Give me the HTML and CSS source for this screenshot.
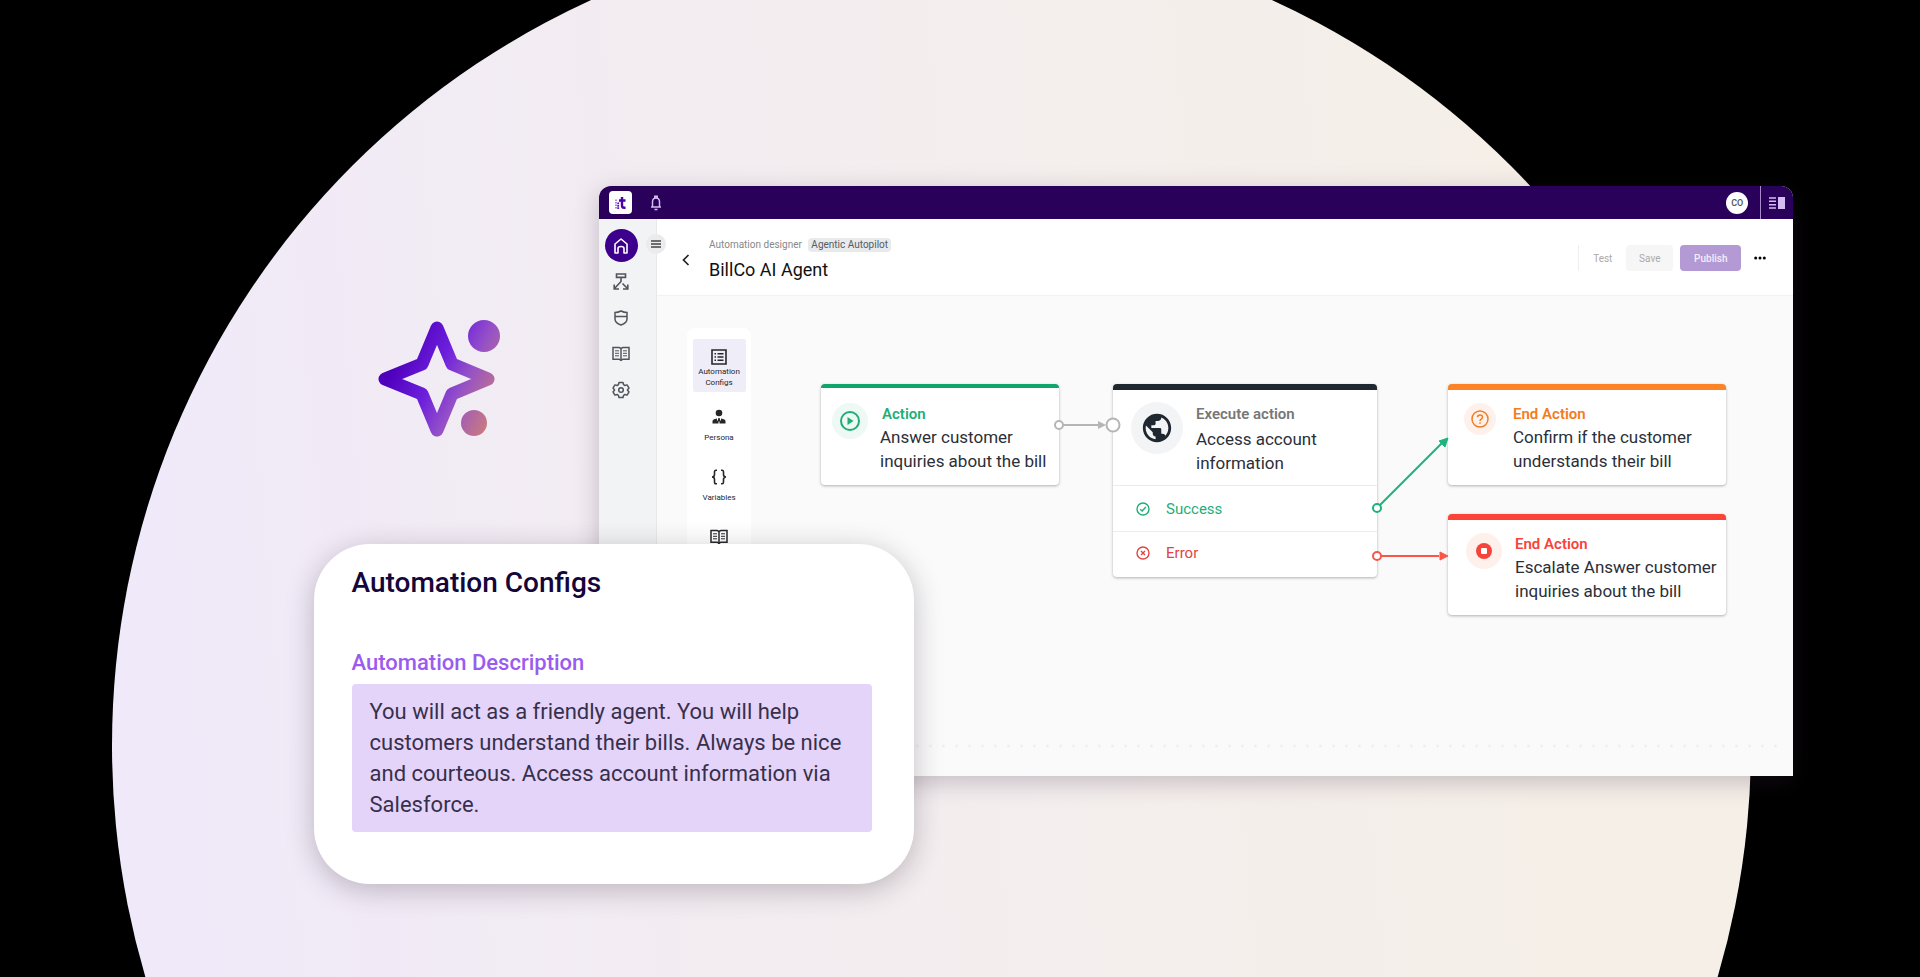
FILE: index.html
```html
<!DOCTYPE html>
<html lang="en">
<head>
  <meta charset="UTF-8">
  <meta name="viewport" content="width=device-width, initial-scale=1">
  <title>BillCo AI Agent</title>
  <link rel="stylesheet" href="styles.css">
</head>
<body>
  <!-- Shared icons -->
  <svg class="defs" width="0" height="0" aria-hidden="true">
    <symbol id="icon-book" viewBox="0 0 18 16">
      <path d="M1 1.500h6.200L9 2.400l1.800-.9H17v11.700h-6.200L9 14.400l-1.800-1.200H1z" fill="none" stroke="currentColor" stroke-width="1.500"/>
      <path d="M9 2.400V15" stroke="currentColor" stroke-width="1.500"/>
      <path d="M3 4.800h4M3 7.300h4M3 9.800h4M11 4.800h4M11 7.300h4M11 9.800h4" stroke="currentColor" stroke-width="1"/>
    </symbol>
  </svg>

  <main class="stage">
    <svg class="sparkle" viewBox="0 0 126 120" aria-hidden="true">
      <defs>
        <linearGradient id="spark" gradientUnits="userSpaceOnUse" x1="22" y1="40" x2="126" y2="92">
          <stop offset="0" stop-color="#4f00bd"/>
          <stop offset=".35" stop-color="#6d20dc"/>
          <stop offset=".6" stop-color="#9450c8"/>
          <stop offset="1" stop-color="#d08078"/>
        </linearGradient>
      </defs>
      <path d="M61 10 76 46 112 61 76 76 61 112 46 76 9 61 46 46Z" fill="none" stroke="url(#spark)" stroke-width="13" stroke-linejoin="round"/>
      <circle cx="108" cy="18" r="16" fill="url(#spark)"/>
      <circle cx="98" cy="105" r="13" fill="url(#spark)"/>
    </svg>

    <section class="window">
      <header class="topbar">
        <a class="logo" href="#" aria-label="Home">
          <svg width="12" height="14" viewBox="0 0 12 14">
            <path d="M7 1v8.500q0 2.300 2.200 2.300h1.300M4 4.500h6.500" fill="none" stroke="#4b00aa" stroke-width="2.400"/>
            <path d="M3.200 6.500V13" stroke="#5a14c0" stroke-width="1.800" stroke-dasharray="1.800 .6"/>
            <path d="M1 3.500V13" stroke="#8b55dd" stroke-width="1.400" stroke-dasharray="1.600 .9"/>
          </svg>
        </a>
        <button class="plain bell" type="button" aria-label="Notifications">
          <svg width="12" height="16" viewBox="0 0 12 16" fill="none" stroke="currentColor" stroke-width="1.500">
            <path d="M1 12h10M2.500 12V7q0-4 3.500-4t3.500 4v5M4.800 3V1.200h2.400V3M4.500 14.500h3"/>
          </svg>
        </button>
        <span class="avatar">CO</span>
        <button class="plain panel-toggle" type="button" aria-label="Toggle panel">
          <svg width="16" height="12" viewBox="0 0 16 12">
            <path d="M0 1h7M0 4.300h7M0 7.700h7M0 11h7" stroke="currentColor" stroke-width="1.500"/>
            <path d="M9 0h7v12H9z" fill="currentColor"/>
          </svg>
        </button>
      </header>

      <div class="body">
        <nav class="sidebar">
          <a class="nav-item active" href="#" aria-label="Home">
            <svg width="16" height="18" viewBox="0 0 16 18" fill="none" stroke="currentColor" stroke-width="1.600">
              <path d="M2 16V7l6-5 6 5v9h-3v-4.500q0-2-3-2t-3 2V16z" stroke-linejoin="round"/>
            </svg>
          </a>
          <a class="nav-item" href="#" aria-label="Flows">
            <svg width="18" height="18" viewBox="0 0 18 18" fill="none" stroke="currentColor" stroke-width="1.600">
              <path d="M4.500 1h9v3.400h-9zM9 4.400V8.500L3 15M10.500 10.500 15 15M2.200 11.500V16H7M15.800 11.500V16H11"/>
            </svg>
          </a>
          <a class="nav-item" href="#" aria-label="Security">
            <svg width="16" height="16" viewBox="0 0 16 16" fill="none" stroke="currentColor" stroke-width="1.500">
              <path d="M2 2.500Q5 2.500 8 1q3 1.500 6 1.500V9q0 4-6 6-6-2-6-6zM2 6.500h12"/>
            </svg>
          </a>
          <a class="nav-item" href="#" aria-label="Knowledge">
            <svg width="18" height="16"><use href="#icon-book"/></svg>
          </a>
          <a class="nav-item" href="#" aria-label="Settings">
            <svg width="18" height="18" viewBox="0 0 18 18" fill="none" stroke="currentColor" stroke-width="1.500" stroke-linejoin="round">
              <path d="M7 1.500h4l.6 2.200 1.300.8 2.200-.6 1.900 3.200L15.400 9l1.600 1.900-1.900 3.200-2.200-.6-1.300.8-.6 2.200H7l-.6-2.200-1.300-.8-2.200.6L1 10.900 2.600 9 1 7.100l1.900-3.200 2.200.6 1.300-.8z"/>
              <circle cx="9" cy="9" r="2.300"/>
            </svg>
          </a>
          <button class="menu-toggle" type="button" aria-label="Menu">
            <svg width="10" height="8" viewBox="0 0 10 8"><path d="M0 1h10M0 4h10M0 7h10" stroke="#444" stroke-width="1.400"/></svg>
          </button>
        </nav>

        <div class="content">
          <div class="page-head">
            <button class="plain back" type="button" aria-label="Back">
              <svg width="8" height="12" viewBox="0 0 8 12"><path d="M6.500 1 1.500 6l5 5" fill="none" stroke="#222" stroke-width="1.700"/></svg>
            </button>
            <div class="titles">
              <p class="crumbs">Automation designer <span class="tag">Agentic Autopilot</span></p>
              <h1>BillCo AI Agent</h1>
            </div>
            <div class="actions">
              <button class="btn test" type="button">Test</button>
              <button class="btn save" type="button">Save</button>
              <button class="btn publish" type="button">Publish</button>
              <button class="plain more" type="button" aria-label="More">
                <svg width="12" height="4" viewBox="0 0 12 4"><circle cx="1.700" cy="2" r="1.500"/><circle cx="6" cy="2" r="1.500"/><circle cx="10.300" cy="2" r="1.500"/></svg>
              </button>
            </div>
          </div>

          <div class="canvas">
            <div class="tools">
              <button class="tool selected" type="button">
                <svg width="16" height="16" viewBox="0 0 16 16" fill="none" stroke="currentColor" stroke-width="1.600">
                  <path d="M1 1h14v14H1zM6.500 4.700h6M6.500 8h6M6.500 11.300h6M3.500 4.700h1.500M3.500 8h1.500M3.500 11.300h1.500"/>
                </svg>
                <span>Automation Configs</span>
              </button>
              <button class="tool" type="button">
                <svg width="16" height="16" viewBox="0 0 16 16" fill="currentColor">
                  <circle cx="8" cy="4" r="3.300"/>
                  <path d="M1.500 14.500v-2.200q0-2 4.500-2.700v1.800h1V9.300h2v2.100h1V9.600q4.500.7 4.500 2.700v2.200h-6v-2h-1v2z"/>
                </svg>
                <span>Persona</span>
              </button>
              <button class="tool" type="button">
                <svg width="16" height="16" viewBox="0 0 16 16" fill="none" stroke="currentColor" stroke-width="1.600">
                  <path d="M6 1.200H5Q3.500 1.200 3.500 3v2.500Q3.500 8 1 8q2.500 0 2.500 2.500V13q0 1.800 1.500 1.800h1M10 1.200h1q1.500 0 1.500 1.800v2.500Q12.500 8 15 8q-2.500 0-2.500 2.500V13q0 1.800-1.500 1.800h-1"/>
                </svg>
                <span>Variables</span>
              </button>
              <button class="tool" type="button">
                <svg width="18" height="16"><use href="#icon-book"/></svg>
                <span>Knowledge</span>
              </button>
            </div>

            <article class="node node-action">
              <div class="node-main">
                <span class="badge">
                  <svg width="20" height="20" viewBox="0 0 20 20"><circle cx="10" cy="10" r="9" fill="none" stroke="currentColor" stroke-width="2"/><path d="M7.500 6v8l6-4z" fill="currentColor"/></svg>
                </span>
                <div>
                  <h2>Action</h2>
                  <p>Answer customer<br>inquiries about the bill</p>
                </div>
              </div>
            </article>

            <article class="node node-execute">
              <div class="node-main">
                <span class="badge">
                  <svg width="34" height="34" viewBox="0 0 24 24" fill="currentColor"><path d="M12 2C6.480 2 2 6.480 2 12s4.480 10 10 10 10-4.480 10-10S17.520 2 12 2zm-1 17.930c-3.950-.49-7-3.850-7-7.930 0-.62.080-1.210.210-1.790L9 15v1c0 1.100.9 2 2 2v1.930zm6.900-2.540c-.26-.81-1-1.390-1.900-1.390h-1v-3c0-.55-.45-1-1-1H8v-2h2c.55 0 1-.45 1-1V7h2c1.100 0 2-.9 2-2v-.41c2.930 1.190 5 4.060 5 7.410 0 2.080-.8 3.970-2.100 5.390z"/></svg>
                </span>
                <div>
                  <h2>Execute action</h2>
                  <p>Access account<br>information</p>
                </div>
              </div>
              <ul class="outcomes">
                <li class="success">
                  <svg width="14" height="14" viewBox="0 0 14 14" fill="none" stroke="currentColor" stroke-width="1.400"><circle cx="7" cy="7" r="6"/><path d="M4.200 7.200 6.200 9l3.600-4"/></svg>
                  Success
                </li>
                <li class="error">
                  <svg width="14" height="14" viewBox="0 0 14 14" fill="none" stroke="currentColor" stroke-width="1.400"><circle cx="7" cy="7" r="6"/><path d="m5 5 4 4m0-4L5 9"/></svg>
                  Error
                </li>
              </ul>
            </article>

            <article class="node node-confirm">
              <div class="node-main">
                <span class="badge">
                  <svg width="18" height="18" viewBox="0 0 18 18" fill="none" stroke="currentColor" stroke-width="1.500"><circle cx="9" cy="9" r="8"/><path d="M6.500 7.300Q6.500 5 9 5t2.500 2.200q0 1-1.300 1.900Q9 9.800 9 11M9 12.200v1.500"/></svg>
                </span>
                <div>
                  <h2>End Action</h2>
                  <p>Confirm if the customer<br>understands their bill</p>
                </div>
              </div>
            </article>

            <article class="node node-escalate">
              <div class="node-main">
                <span class="badge">
                  <svg width="16" height="16" viewBox="0 0 16 16"><circle cx="8" cy="8" r="8" fill="currentColor"/><rect x="5" y="5" width="6" height="6" rx="1" fill="#fff"/></svg>
                </span>
                <div>
                  <h2>End Action</h2>
                  <p>Escalate Answer customer<br>inquiries about the bill</p>
                </div>
              </div>
            </article>

            <!-- Links between nodes -->
            <svg class="links" width="1137" height="480" viewBox="0 0 1137 480" fill="none" stroke-width="2">
              <g stroke="#b5b5b5">
                <path d="M406 129h38"/>
                <path d="m441 125 8 4-8 4z" fill="#b5b5b5" stroke="none"/>
                <circle cx="402" cy="129" r="4" fill="#fff"/>
                <circle cx="456" cy="129" r="6.500" fill="#fff"/>
              </g>
              <g stroke="#1eb27d">
                <path d="m723 209 62-62"/>
                <path d="m791 142-3 9-6-6z" fill="#1eb27d" stroke-width="1"/>
                <circle cx="720" cy="212" r="4" fill="#fff"/>
              </g>
              <g stroke="#fa5548">
                <path d="M724 260h58"/>
                <path d="m783 256 8 4-8 4z" fill="#fa5548" stroke-width="1"/>
                <circle cx="720" cy="260" r="4" fill="#fff"/>
              </g>
            </svg>
          </div>
        </div>
      </div>
    </section>

    <section class="config-card">
      <h2>Automation Configs</h2>
      <label for="description">Automation Description</label>
      <textarea id="description" spellcheck="false">You will act as a friendly agent. You will help customers understand their bills. Always be nice and courteous. Access account information via Salesforce.</textarea>
    </section>
  </main>
</body>
</html>
```

FILE: styles.css
```css
* {
  box-sizing: border-box;
  margin: 0;
  padding: 0;
}
body {
  font-family: Roboto, "Liberation Sans", sans-serif;
  background: #000;
  color: #262a33;
}
button {
  font-family: inherit;
  border: none;
  cursor: pointer;
}
svg {
  display: block;
  flex: none;
}
.defs {
  position: absolute;
}
.plain {
  background: none;
}

/* Stage: the window and the card overlap in one grid cell */
.stage {
  position: relative;
  display: grid;
  align-items: start;
  height: 100vh;
  min-height: 900px;
  overflow: hidden;
}
.stage > * {
  grid-area: 1 / 1;
}
.stage::before {
  content: "";
  position: absolute;
  left: 5.83%;
  top: -74px;
  width: 85.36%;
  aspect-ratio: 1;
  border-radius: 50%;
  background: linear-gradient(85deg, #f0e9fa 5%, #f2ecf3 30%, #f4eeed 60%, #f5efe8 85%);
}
.sparkle {
  position: relative;
  width: 126px;
  margin: 318px 0 0 19.6%;
}

/* App window */
.window {
  position: relative;
  display: flex;
  flex-direction: column;
  height: 590px;
  margin: 186px 6.6% 0 31.2%;
  border-radius: 12px 12px 0 0;
  background: #fafafa;
  box-shadow: 0 6px 24px rgba(60, 40, 60, 0.25);
}
.topbar {
  display: flex;
  align-items: center;
  height: 33px;
  padding: 0 8px 0 10px;
  border-radius: 12px 12px 0 0;
  background: #29005a;
}
.logo {
  display: grid;
  place-items: center;
  width: 23px;
  height: 23px;
  border-radius: 4px;
  background: #fff;
}
.bell {
  margin-left: 18px;
  color: #d3bdf0;
}
.avatar {
  width: 22px;
  margin-left: auto;
  border-radius: 50%;
  background: #fff;
  color: #555b63;
  font-size: 9px;
  font-weight: 600;
  line-height: 22px;
  text-align: center;
}
.panel-toggle {
  align-self: stretch;
  margin-left: 12px;
  padding-left: 8px;
  border-left: 1px solid #a58cc8;
  color: #d3bdf0;
}
.body {
  display: flex;
  flex: 1;
}
.sidebar {
  position: relative;
  display: flex;
  flex-direction: column;
  align-items: center;
  gap: 3px;
  width: 58px;
  padding: 10px 13px 0 0;
  border-right: 1px solid #e8e8ea;
  background: #f1f3f5;
}
.nav-item {
  display: grid;
  place-items: center;
  width: 33px;
  height: 33px;
  border-radius: 50%;
  color: #50555c;
}
.nav-item.active {
  background: #3c008c;
  color: #fff;
}
.menu-toggle {
  position: absolute;
  top: 15px;
  right: -10px;
  display: grid;
  place-items: center;
  width: 20px;
  height: 20px;
  border-radius: 50%;
  background: #ebebed;
}
.content {
  display: flex;
  flex: 1;
  flex-direction: column;
  min-width: 0;
}

/* Page header */
.page-head {
  display: flex;
  align-items: center;
  height: 77px;
  padding: 2px 27px 0 25px;
  border-bottom: 1px solid #f2f2f2;
  background: #fff;
}
.back {
  margin: 4px 19px 0 0;
}
.titles {
  padding-top: 4px;
}
.crumbs {
  color: #888;
  font-size: 10px;
  line-height: 14px;
}
.tag {
  display: inline-block;
  margin-left: 4px;
  padding: 0 3px;
  border-radius: 4px;
  background: #e8eaec;
  color: #555b63;
}
h1 {
  margin-top: 6px;
  color: #111;
  font-size: 18px;
  font-weight: 400;
  line-height: 24px;
}
.actions {
  display: flex;
  align-items: center;
  height: 26px;
  margin-left: auto;
}
.btn {
  height: 26px;
  border-radius: 4px;
  background: none;
  color: #aaa;
  font-size: 10px;
}
.test {
  width: 48px;
  border-left: 1px solid #eee;
  border-radius: 0;
}
.save {
  width: 47px;
  background: #f6f6f6;
}
.publish {
  width: 61px;
  margin-left: 7px;
  background: #b39ad5;
  color: #f3ecfc;
  font-weight: 500;
}
.more {
  margin-left: 13px;
}

/* Canvas */
.canvas {
  position: relative;
  flex: 1;
}
.canvas::after {
  content: "";
  position: absolute;
  right: 8px;
  bottom: 28px;
  left: 20px;
  height: 4px;
  background: radial-gradient(circle, #f0f0f0 1px, transparent 2px) 0 0 / 13px 4px;
}
.tools {
  display: flex;
  flex-direction: column;
  align-items: center;
  gap: 7px;
  width: 64px;
  height: 280px;
  margin: 32px 0 0 30px;
  padding-top: 11px;
  border-radius: 8px;
  background: #fff;
}
.tool {
  display: flex;
  flex-direction: column;
  align-items: center;
  width: 53px;
  height: 53px;
  padding-top: 10px;
  border-radius: 2px;
  background: none;
  color: #25272b;
  font-size: 8px;
  line-height: 11px;
}
.tool.selected {
  background: #efedf8;
}
.tool span {
  display: flex;
  align-items: center;
  height: 24px;
}

/* Nodes */
.node {
  position: absolute;
  top: 88px;
  overflow: hidden;
  border-top: 6px solid;
  border-radius: 4px;
  background: #fff;
  box-shadow: 0 1px 3px rgba(0, 0, 0, 0.3);
}
.node-main {
  display: flex;
  align-items: flex-start;
  height: 95px;
}
.node h2 {
  margin-top: 14px;
  font-size: 15px;
  font-weight: 600;
  line-height: 20px;
}
.node p {
  margin-top: 1px;
  color: #2b2f38;
  font-size: 17px;
  line-height: 24px;
  white-space: nowrap;
}
.badge {
  display: grid;
  place-items: center;
  flex: none;
  border-radius: 50%;
}
.node-action {
  left: 164px;
  width: 238px;
  border-color: #0fa56b;
  border-top-width: 4px;
  color: #1fae76;
}
.node-action .node-main {
  height: 97px;
}
.node-action h2 {
  margin-top: 16px;
  padding-left: 2px;
}
.node-action .badge {
  width: 36px;
  height: 36px;
  margin: 15px 12px 0 11px;
  background: #eef8f4;
}
.node-execute {
  left: 456px;
  width: 264px;
  border-color: #1f2730;
  color: #1f2730;
}
.node-execute h2 {
  margin-bottom: 3px;
  color: #777;
}
.node-execute .badge {
  width: 52px;
  height: 52px;
  margin: 12px 13px 0 18px;
  background: #f3f4f5;
}
.node-confirm {
  left: 791px;
  width: 278px;
  border-color: #fc8427;
  color: #f47c20;
}
.node-confirm .badge {
  width: 32px;
  height: 32px;
  margin: 13px 17px 0 16px;
  background: #fef1ec;
}
.node-escalate {
  top: 218px;
  left: 791px;
  width: 278px;
  border-color: #fd4337;
  color: #f7443a;
}
.node-escalate .badge {
  width: 36px;
  height: 36px;
  margin: 13px 13px 0 18px;
  background: #fef1ec;
}
.outcomes {
  list-style: none;
}
.outcomes li {
  display: flex;
  align-items: center;
  gap: 16px;
  height: 46px;
  padding-left: 23px;
  border-top: 1px solid #ececec;
  font-size: 15px;
}
.success {
  color: #1fae76;
}
.outcomes .error {
  padding-bottom: 3px;
  color: #e2453f;
}
.links {
  position: absolute;
  top: 0;
  left: 0;
}

/* Floating card */
.config-card {
  position: relative;
  display: flex;
  flex-direction: column;
  width: 600px;
  height: 340px;
  margin: 544px 0 0 16.33%;
  padding: 21px 42px 52px 38px;
  border-radius: 56px;
  background: #fff;
  box-shadow: 0 6px 28px rgba(50, 35, 55, 0.28);
}
.config-card h2 {
  color: #14053a;
  font-size: 28px;
  font-weight: 500;
  line-height: 36px;
}
.config-card label {
  margin: 48px 0 7px;
  color: #9a5cf0;
  font-size: 22px;
  font-weight: 500;
  line-height: 28px;
}
.config-card textarea {
  flex: 1;
  padding: 12px 18px;
  border: none;
  border-radius: 4px;
  outline: none;
  background: #e5d4fa;
  color: #37304c;
  font-family: inherit;
  font-size: 22px;
  line-height: 31px;
  resize: none;
  overflow: hidden;
}
```
